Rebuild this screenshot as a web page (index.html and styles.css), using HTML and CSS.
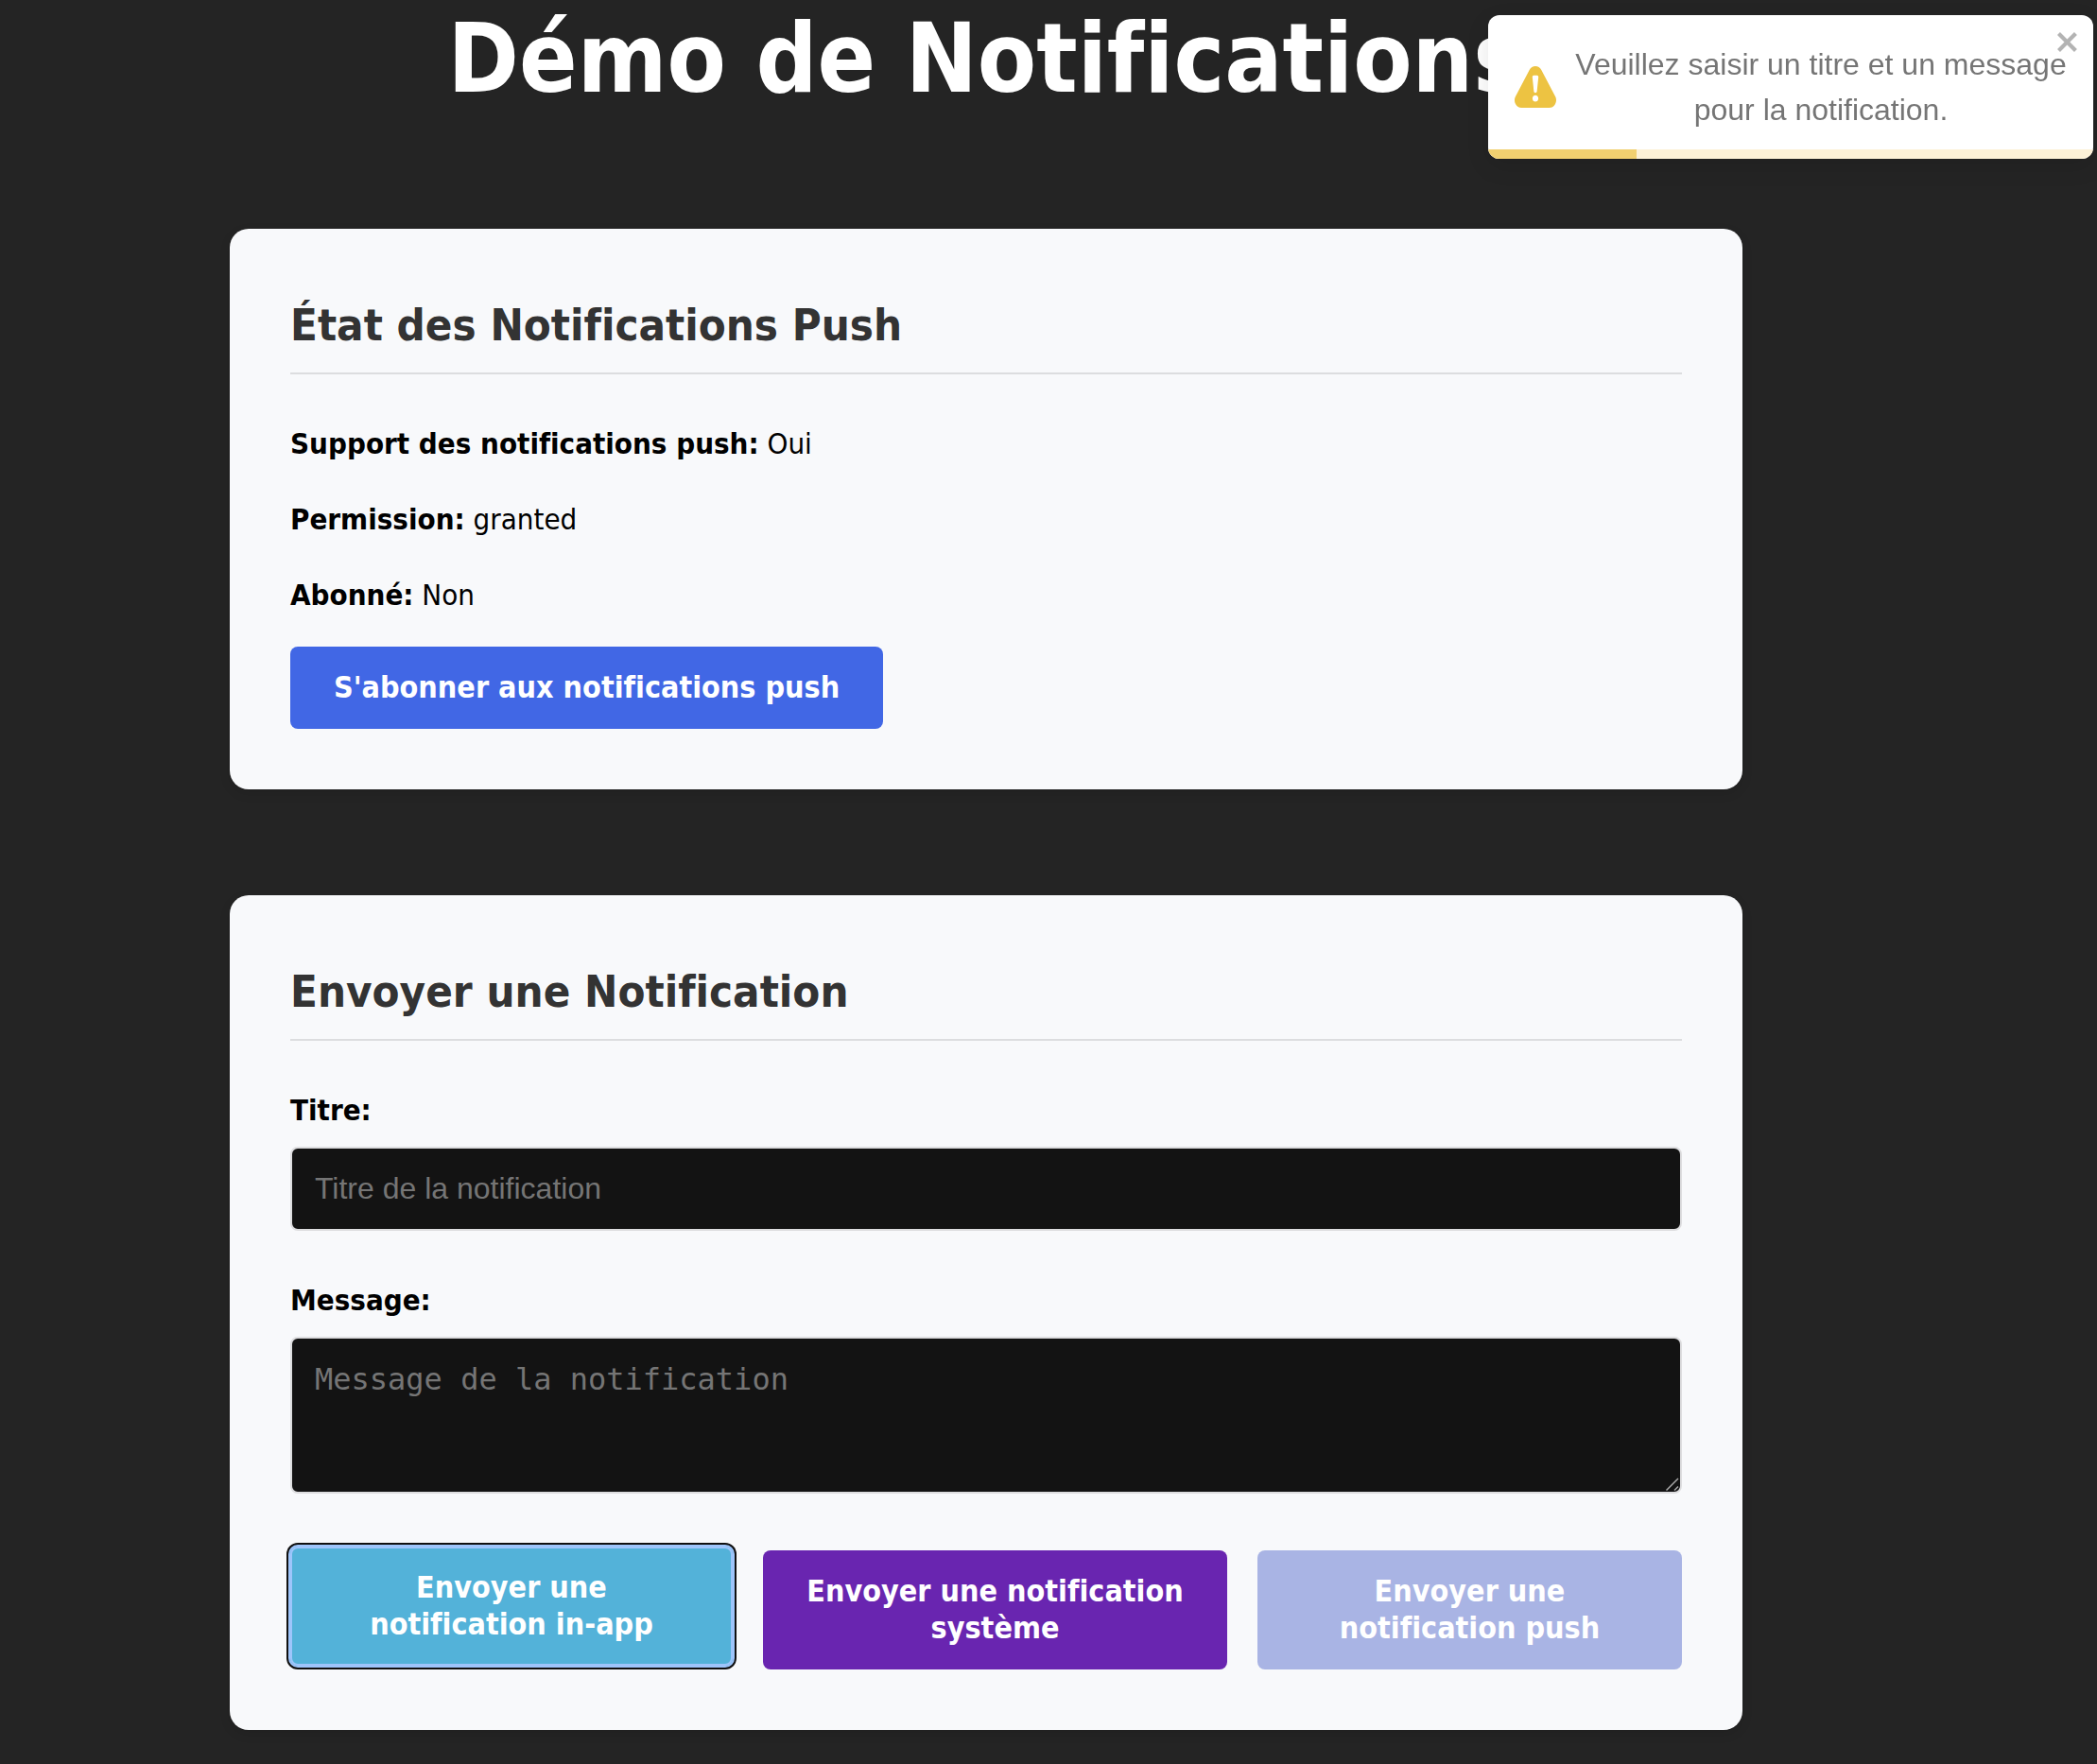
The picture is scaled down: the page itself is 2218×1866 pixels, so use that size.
FILE: index.html
```html
<!DOCTYPE html>
<html lang="fr">
<head>
  <meta charset="utf-8">
  <meta name="viewport" content="width=device-width, initial-scale=1">
  <title>Démo de Notifications</title>
  <link rel="stylesheet" href="styles.css">
</head>
<body>
  <main class="demo">
    <h1 class="demo-title">Démo de Notifications</h1>

    <section class="card">
      <h2 class="card-title">État des Notifications Push</h2>
      <div class="status-list">
        <p class="status"><strong>Support des notifications push:</strong> Oui</p>
        <p class="status"><strong>Permission:</strong> granted</p>
        <p class="status"><strong>Abonné:</strong> Non</p>
      </div>
      <button class="btn btn-subscribe" type="button">S'abonner aux notifications push</button>
    </section>

    <section class="card">
      <h2 class="card-title">Envoyer une Notification</h2>
      <form class="form">
        <div class="field">
          <label class="field-label" for="title">Titre:</label>
          <input class="field-control" id="title" type="text" placeholder="Titre de la notification">
        </div>
        <div class="field">
          <label class="field-label" for="message">Message:</label>
          <div class="area-wrap">
            <textarea class="field-control field-area" id="message" rows="3" placeholder="Message de la notification"></textarea>
            <svg class="area-grip" viewBox="0 0 16 16" aria-hidden="true">
              <path d="M1.5 14.5l12.5-12.5M10 14.5l4-4" fill="none" stroke="#a8a8a8" stroke-width="1.5"/>
            </svg>
          </div>
        </div>
        <div class="actions">
          <button class="btn btn-inapp" type="button">Envoyer une notification in-app</button>
          <button class="btn btn-system" type="button">Envoyer une notification système</button>
          <button class="btn btn-push" type="button" disabled>Envoyer une notification push</button>
        </div>
      </form>
    </section>
  </main>

  <div class="toast" role="alert">
    <svg class="toast-icon" viewBox="0 0 24 24" aria-hidden="true">
      <path fill="currentColor" d="M23.32 17.191L15.438 2.184C14.728.833 13.416 0 11.996 0c-1.42 0-2.733.833-3.443 2.184L.533 17.448a4.744 4.744 0 000 4.368C1.243 23.167 2.555 24 3.975 24h16.05C22.22 24 24 22.044 24 19.632c0-.904-.251-1.746-.68-2.44zm-9.622 1.46c0 1.033-.724 1.823-1.698 1.823s-1.698-.79-1.698-1.822v-.043c0-1.028.724-1.822 1.698-1.822s1.698.79 1.698 1.822v.043zm.039-12.285l-.84 8.06c-.057.581-.408.943-.897.943-.49 0-.84-.367-.896-.942l-.84-8.065c-.057-.624.25-1.095.779-1.095h1.91c.528.005.84.476.784 1.1z"/>
    </svg>
    <p class="toast-text">Veuillez saisir un titre et un message pour la notification.</p>
    <button class="toast-close" type="button" aria-label="Fermer">
      <svg class="toast-close-icon" viewBox="0 0 14 16" aria-hidden="true">
        <path fill="currentColor" fill-rule="evenodd" d="M7.71 8.23l3.75 3.75-1.48 1.48-3.75-3.75-3.75 3.75L1 11.98l3.75-3.75L1 4.48 2.48 3l3.75 3.75L9.98 3l1.48 1.48-3.75 3.75z"/>
      </svg>
    </button>
    <div class="toast-track"><div class="toast-progress" style="width: 24.6%"></div></div>
  </div>
</body>
</html>
```

FILE: styles.css
```css
*,
*::before,
*::after {
  box-sizing: border-box;
}

body {
  margin: 0;
  padding: 6px 132px 36px 0;
  background: #242424;
  color: #000;
  font-family: "DejaVu Sans Condensed", "DejaVu Sans", sans-serif;
  font-size: 31px;
  font-variant-ligatures: none;
  line-height: 50px;
}

h1,
h2,
p {
  margin: 0;
}

.demo {
  display: flex;
  flex-direction: column;
  gap: 112px;
  max-width: 1600px;
  margin: 0 auto;
}

.demo-title {
  margin-bottom: 12px;
  color: #fff;
  font-size: 101px;
  line-height: 112px;
  text-align: center;
}

.card {
  padding: 64px;
  border-radius: 20px;
  background: #f8f9fb;
  box-shadow: 0 4px 12px rgba(0, 0, 0, 0.1);
}

.card-title {
  margin-bottom: 48px;
  padding-bottom: 12px;
  border-bottom: 2px solid #dcdddf;
  color: #333;
  font-size: 47px;
  line-height: 76px;
}

.status-list {
  display: flex;
  flex-direction: column;
  gap: 30px;
  margin-bottom: 30px;
}

.btn {
  padding: 24px 46px;
  border: 0;
  border-radius: 8px;
  color: #fff;
  font-family: inherit;
  font-size: 32px;
  font-variant-ligatures: none;
  font-weight: 700;
  line-height: 39px;
  cursor: pointer;
}

.btn-subscribe {
  display: block;
  background: #4167e5;
}

.field {
  display: flex;
  flex-direction: column;
  gap: 14px;
  margin-bottom: 48px;
}

.field-label {
  font-weight: 700;
}

.field-control {
  display: block;
  width: 100%;
  padding: 24px;
  border: 2px solid #dddddf;
  border-radius: 8px;
  background: #131313;
  color: #fff;
  font-family: "Liberation Sans", Arial, sans-serif;
  font-size: 32px;
  line-height: 37px;
}

.field-control::placeholder {
  color: #757575;
}

.area-wrap {
  position: relative;
}

.field-area {
  font-family: "DejaVu Sans Mono", monospace;
  line-height: 38px;
  resize: none;
}

.area-grip {
  position: absolute;
  right: 2px;
  bottom: 2px;
  width: 16px;
  height: 16px;
}

.actions {
  display: grid;
  grid-template-columns: 468fr 491fr 449fr;
  gap: 32px;
  padding-top: 12px;
}

.btn-inapp {
  background: #53b2d9;
  box-shadow: inset 0 0 0 2px #9ec5fb, 0 0 0 2px #9ec5fb, 0 0 0 4px #101010;
  transform: translateY(-4px);
}

.btn-system {
  background: #6925b0;
}

.btn-push {
  background: #a9b4e4;
  cursor: not-allowed;
}

.toast {
  position: fixed;
  top: 16px;
  right: 4px;
  display: flex;
  align-items: center;
  gap: 20px;
  width: 640px;
  padding: 28px;
  overflow: hidden;
  border-radius: 12px;
  background: #fff;
  box-shadow: 0 8px 24px rgba(0, 0, 0, 0.1);
  color: #757575;
  font-family: "Liberation Sans", Arial, sans-serif;
  font-size: 32px;
  line-height: 48px;
}

.toast-icon {
  flex: none;
  width: 44px;
  height: 44px;
  color: #edc342;
}

.toast-text {
  flex: 1;
  text-align: center;
}

.toast-close {
  position: absolute;
  top: 12px;
  right: 12px;
  padding: 0;
  border: 0;
  background: none;
  color: #b3b3b3;
  cursor: pointer;
}

.toast-close-icon {
  display: block;
  width: 28px;
  height: 32px;
}

.toast-track {
  position: absolute;
  right: 0;
  bottom: 0;
  left: 0;
  height: 10px;
  background: #fcf1d7;
}

.toast-progress {
  height: 100%;
  background: #f1d070;
}
```
